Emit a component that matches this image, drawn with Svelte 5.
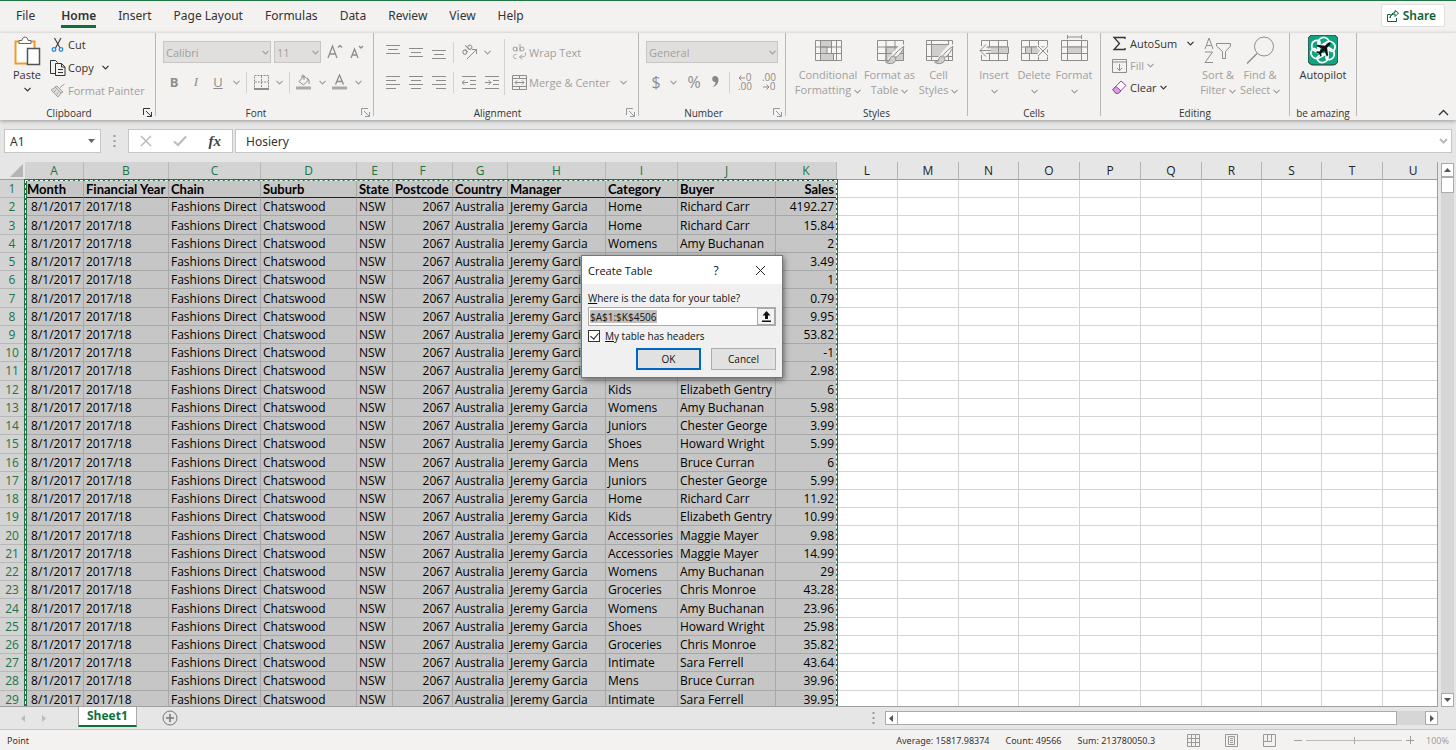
<script>
  const tabs = ['File', 'Home', 'Insert', 'Page Layout', 'Formulas', 'Data', 'Review', 'View', 'Help'];
  let activeTab = 'Home';

  const columns = [
    { letter: 'A', name: 'Month', width: 59 },
    { letter: 'B', name: 'Financial Year', width: 85 },
    { letter: 'C', name: 'Chain', width: 92 },
    { letter: 'D', name: 'Suburb', width: 96 },
    { letter: 'E', name: 'State', width: 36 },
    { letter: 'F', name: 'Postcode', width: 60 },
    { letter: 'G', name: 'Country', width: 55 },
    { letter: 'H', name: 'Manager', width: 98 },
    { letter: 'I', name: 'Category', width: 72 },
    { letter: 'J', name: 'Buyer', width: 98 },
    { letter: 'K', name: 'Sales', width: 61 },
    { letter: 'L', width: 61 },
    { letter: 'M', width: 61 },
    { letter: 'N', width: 60 },
    { letter: 'O', width: 61 },
    { letter: 'P', width: 61 },
    { letter: 'Q', width: 61 },
    { letter: 'R', width: 60 },
    { letter: 'S', width: 60 },
    { letter: 'T', width: 61 },
    { letter: 'U', width: 61 }
  ];

  const rowHeaderWidth = 25;
  const usedColumns = columns.filter((c) => c.name);
  const emptyColumns = columns.filter((c) => !c.name);
  const selectionWidth = usedColumns.reduce((sum, c) => sum + c.width, 0);
  const tableWidth = rowHeaderWidth + columns.reduce((sum, c) => sum + c.width, 0);

  const sales = [
    ['Home', 'Richard Carr', '4192.27'],
    ['Home', 'Richard Carr', '15.84'],
    ['Womens', 'Amy Buchanan', '2'],
    ['Womens', 'Amy Buchanan', '3.49'],
    ['Kids', 'Elizabeth Gentry', '1'],
    ['Juniors', 'Chester George', '0.79'],
    ['Shoes', 'Howard Wright', '9.95'],
    ['Mens', 'Bruce Curran', '53.82'],
    ['Home', 'Richard Carr', '-1'],
    ['Kids', 'Elizabeth Gentry', '2.98'],
    ['Kids', 'Elizabeth Gentry', '6'],
    ['Womens', 'Amy Buchanan', '5.98'],
    ['Juniors', 'Chester George', '3.99'],
    ['Shoes', 'Howard Wright', '5.99'],
    ['Mens', 'Bruce Curran', '6'],
    ['Juniors', 'Chester George', '5.99'],
    ['Home', 'Richard Carr', '11.92'],
    ['Kids', 'Elizabeth Gentry', '10.99'],
    ['Accessories', 'Maggie Mayer', '9.98'],
    ['Accessories', 'Maggie Mayer', '14.99'],
    ['Womens', 'Amy Buchanan', '29'],
    ['Groceries', 'Chris Monroe', '43.28'],
    ['Womens', 'Amy Buchanan', '23.96'],
    ['Shoes', 'Howard Wright', '25.98'],
    ['Groceries', 'Chris Monroe', '35.82'],
    ['Intimate', 'Sara Ferrell', '43.64'],
    ['Mens', 'Bruce Curran', '39.96'],
    ['Intimate', 'Sara Ferrell', '39.95']
  ];

  const rows = sales.map(([category, buyer, amount]) => [
    '8/1/2017', '2017/18', 'Fashions Direct', 'Chatswood', 'NSW', '2067',
    'Australia', 'Jeremy Garcia', category, buyer, amount
  ]);

  // Month, Postcode and Sales are right aligned
  const rightAligned = [0, 5, 10];

  let cellRef = 'A1';
  let formula = 'Hosiery';
  let zoom = 50;
  let dialogOpen = true;
  let tableRange = '$A$1:$K$4506';
  let hasHeaders = true;

  function closeDialog() {
    dialogOpen = false;
  }
</script>

{#snippet chevron()}
  <svg class="chevron" width="7" height="5" viewBox="0 0 7 5"><path d="M.5.800l3 3 3-3" /></svg>
{/snippet}

{#snippet launcher()}
  <svg width="9" height="9" viewBox="0 0 9 9"><path d="M.5 7V.5H7M3 3l5 5M8.500 4v4.500H4" /></svg>
{/snippet}

{#snippet brush()}
  <path class="halo" d="M30 9L20 20M16 25l5-5" />
  <path class="solid" d="M31 11.500c-3 1.500-8 6-10 9l2 2c3-2 7-7 8-11z" />
  <path class="tint" d="M20.500 21c-3 0-3.500 2-4 4-.5 1.500-2 2-4 2 2.500 2 7 2.500 9.500-.5 1.500-1.500.7-3.800-1.500-5.500z" />
{/snippet}

<div class="window">
  <header class="tab-bar">
    <nav>
      {#each tabs as tab}
        <button type="button" class="tab" class:active={tab === activeTab} onclick={() => (activeTab = tab)}>{tab}</button>
      {/each}
    </nav>
    <button type="button" class="share">
      <svg width="12" height="12" viewBox="0 0 12 12"><path d="M3.500 4.500h-3v7h9V8M3 8c.5-3 2-4 5-4V6.500l3.500-3.500L8 .5V2.500C5 3 3.500 5 3 8z" /></svg>
      Share
    </button>
  </header>

  <div class="ribbon">
    <section class="group clipboard">
      <div class="group-body">
        <button type="button" class="big enabled">
          <svg width="28" height="31" viewBox="0 0 28 31">
            <path d="M2.500 6.500h19v22h-19z" fill="#fff" stroke="#f29b2a" stroke-width="2" />
            <path d="M6 8.500V5.500h3c0-4.500 6-4.500 6 0h3v3z" fill="#fff" stroke="#666" />
            <path d="M14.500 13.500h12v16h-12z" fill="#fff" stroke="#555" stroke-width="1.500" />
          </svg>
          <span>Paste</span>
          {@render chevron()}
        </button>
        <div class="stack">
          <button type="button" class="small enabled">
            <svg width="16" height="16" viewBox="0 0 16 16">
              <path d="M4.500 1l5.500 10M11 1L5.500 11" stroke="#444" stroke-width="1.200" />
              <g stroke="#2b88d8" stroke-width="1.300"><circle cx="4" cy="12.500" r="1.800" /><circle cx="11" cy="12.500" r="1.800" /></g>
            </svg>
            Cut
          </button>
          <button type="button" class="small enabled">
            <svg width="16" height="16" viewBox="0 0 16 16">
              <path d="M5.500 13.500h-5V.5h5l2 2M5.500 3.500h6l3.500 3.500v8.500H5.500zM11.500 3.500V7H15M8 9.500h5M8 12.500h5" />
            </svg>
            Copy <i class="gap"></i>{@render chevron()}
          </button>
          <button type="button" class="small" disabled>
            <svg width="16" height="16" viewBox="0 0 16 16">
              <path d="M14.500 1L10 4.500M7 3l6 6-2 1-6-6zM5 4.500L1 7l7 7 3-4" fill="#ddd" /><path d="M4 9l2-2M6 11.500l2-2" />
            </svg>
            Format Painter
          </button>
        </div>
      </div>
      <footer>Clipboard <button type="button" class="launch enabled" aria-label="Clipboard options">{@render launcher()}</button></footer>
    </section>

    <section class="group font">
      <div class="group-body rows">
        <div class="row">
          <span class="select font-name"><select aria-label="Font" disabled><option>Calibri</option></select>{@render chevron()}</span>
          <span class="select font-size"><select aria-label="Font size" disabled><option>11</option></select>{@render chevron()}</span>
          <button type="button" class="icon" disabled aria-label="Increase font size">
            <svg width="16" height="16" viewBox="0 0 16 16"><path d="M1 14L5.500 2l4.500 12M2.500 10h6M11 3.500l2-2 2 2" stroke-width="1.300" /></svg>
          </button>
          <button type="button" class="icon" disabled aria-label="Decrease font size">
            <svg width="16" height="16" viewBox="0 0 16 16"><path d="M2 14L5.500 5 9 14M3.500 11h4M10 2l2 2 2-2" stroke-width="1.300" /></svg>
          </button>
        </div>
        <div class="row">
          <button type="button" class="icon letter" disabled><b>B</b></button>
          <button type="button" class="icon letter italic" disabled><i>I</i></button>
          <button type="button" class="icon letter" disabled><u>U</u></button>
          <button type="button" class="drop" disabled aria-label="Underline style">{@render chevron()}</button>
          <span class="divider"></span>
          <button type="button" class="icon" disabled aria-label="Borders">
            <svg width="15" height="15" viewBox="0 0 15 15"><path d="M.5.5h14v13H.5zM7.500 1v12M1 7h13" stroke-dasharray="2 1" /><path d="M0 14h15" stroke-width="2" /></svg>
          </button>
          <button type="button" class="drop" disabled aria-label="Border style">{@render chevron()}</button>
          <span class="divider"></span>
          <button type="button" class="icon" disabled aria-label="Fill color">
            <svg width="16" height="16" viewBox="0 0 16 16"><path d="M8 2L3 7.500l4.500 3.500 5-5zM6 4V1.500c1-1 2 0 2 1V6M11 4c2 1 2.500 3 2 6" /><path d="M0 14h15" stroke-width="3" stroke="#a9a9a9" /></svg>
          </button>
          <button type="button" class="drop" disabled aria-label="More fill colors">{@render chevron()}</button>
          <button type="button" class="icon" disabled aria-label="Font color">
            <svg width="16" height="16" viewBox="0 0 16 16"><path d="M3.500 10.500L7.500 1l4 9.500M5 7.500h5" stroke-width="1.300" /><path d="M0 14h15" stroke-width="3" stroke="#a9a9a9" /></svg>
          </button>
          <button type="button" class="drop" disabled aria-label="More font colors">{@render chevron()}</button>
        </div>
      </div>
      <footer>Font <button type="button" class="launch" aria-label="Font options">{@render launcher()}</button></footer>
    </section>

    <section class="group alignment">
      <div class="group-body">
        <div class="rows align-icons">
          <div class="row">
            <button type="button" class="icon" disabled aria-label="Top align"><svg width="14" height="14" viewBox="0 0 14 14"><path d="M0 .5h14M2 4.500h10M0 8.500h14" /></svg></button>
            <button type="button" class="icon" disabled aria-label="Middle align"><svg width="14" height="14" viewBox="0 0 14 14"><path d="M0 3.500h14M2 7.500h10M0 11.500h14" /></svg></button>
            <button type="button" class="icon" disabled aria-label="Bottom align"><svg width="14" height="14" viewBox="0 0 14 14"><path d="M0 5.500h14M2 9.500h10M0 13.500h14" /></svg></button>
            <span class="divider"></span>
            <button type="button" class="icon" disabled aria-label="Orientation">
              <svg width="16" height="16" viewBox="0 0 16 16"><g transform="rotate(-45 6 6)"><circle cx="3" cy="6" r="2" /><path d="M5 4v4M8 1.500V8" /><circle cx="10" cy="6" r="2" /></g><path d="M6 15l9-9M11 5.500h4.500V10" /></svg>
            </button>
            <button type="button" class="drop" disabled aria-label="Orientation options">{@render chevron()}</button>
          </div>
          <div class="row">
            <button type="button" class="icon" disabled aria-label="Align left"><svg width="14" height="14" viewBox="0 0 14 14"><path d="M0 1.500h14M0 5.500h10M0 9.500h14M0 13.500h10" /></svg></button>
            <button type="button" class="icon" disabled aria-label="Align center"><svg width="14" height="14" viewBox="0 0 14 14"><path d="M0 1.500h14M2 5.500h10M0 9.500h14M2 13.500h10" /></svg></button>
            <button type="button" class="icon" disabled aria-label="Align right"><svg width="14" height="14" viewBox="0 0 14 14"><path d="M0 1.500h14M4 5.500h10M0 9.500h14M4 13.500h10" /></svg></button>
            <span class="divider"></span>
            <button type="button" class="icon" disabled aria-label="Decrease indent"><svg width="14" height="14" viewBox="0 0 14 14"><path d="M0 1.500h14M8 5.500h6M8 9.500h6M0 13.500h14M0 7.500h6M2.500 5L0 7.500 2.500 10" /></svg></button>
            <button type="button" class="icon" disabled aria-label="Increase indent"><svg width="14" height="14" viewBox="0 0 14 14"><path d="M0 1.500h14M8 5.500h6M8 9.500h6M0 13.500h14M0 7.500h6M3.500 5L6 7.500 3.500 10" /></svg></button>
          </div>
        </div>
        <span class="divider tall"></span>
        <div class="rows">
          <div class="row">
            <button type="button" class="small" disabled>
              <svg width="15" height="16" viewBox="0 0 15 16"><circle cx="3" cy="5" r="2" /><path d="M5 3v4.500M8 0v7.500" /><circle cx="10" cy="5" r="2" /><path d="M4.500 10.500c-4-1-4 5 0 4M13.500 8.500v2c0 2-2 2.500-6 2.500M10 10.500L7.500 13l2.500 2.500" /></svg>
              Wrap Text
            </button>
          </div>
          <div class="row">
            <button type="button" class="small merge" disabled>
              <svg width="15" height="15" viewBox="0 0 15 15"><path d="M.5.500h14v14H.5zM.5 3.500h14M.5 11.500h14M7.500.500v3M7.500 11.500v3M3 7.500h9M5 5.500l-2 2 2 2M10 5.500l2 2-2 2" stroke="#8f8d8b" /></svg>
              Merge &amp; Center
            </button>
            <button type="button" class="drop" disabled aria-label="Merge options">{@render chevron()}</button>
          </div>
        </div>
      </div>
      <footer>Alignment <button type="button" class="launch" aria-label="Alignment options">{@render launcher()}</button></footer>
    </section>

    <section class="group number">
      <div class="group-body rows">
        <div class="row">
          <span class="select format"><select aria-label="Number format" disabled><option>General</option></select>{@render chevron()}</span>
        </div>
        <div class="row">
          <button type="button" class="icon sign" disabled>$</button>
          <button type="button" class="drop" disabled aria-label="Currency options">{@render chevron()}</button>
          <button type="button" class="icon sign percent" disabled>%</button>
          <button type="button" class="icon" disabled aria-label="Comma style">
            <svg width="10" height="14" viewBox="0 0 10 14"><path d="M5 1a3 3 0 1 0 .5 6C5.500 9.500 4 11 2 12c4-.5 6.500-3.500 6.500-7A3.500 3.500 0 0 0 5 1z" fill="#888" stroke="none" /></svg>
          </button>
          <span class="divider"></span>
          <button type="button" class="icon decimals" disabled aria-label="Increase decimal">
            <span><svg width="7" height="6" viewBox="0 0 7 6"><path d="M0 3h6M2.500.500L0 3l2.500 2.500" /></svg>0</span><span>.00</span>
          </button>
          <button type="button" class="icon decimals" disabled aria-label="Decrease decimal">
            <span>.00</span><span><svg width="7" height="6" viewBox="0 0 7 6"><path d="M0 3h6M3.500.500L6 3 3.500 5.500" /></svg>0</span>
          </button>
        </div>
      </div>
      <footer>Number <button type="button" class="launch" aria-label="Number options">{@render launcher()}</button></footer>
    </section>

    <section class="group styles">
      <div class="group-body">
        <button type="button" class="big conditional" disabled>
          <svg width="34" height="31" viewBox="0 0 34 31">
            <path class="solid" d="M4.500 5.500h26v20h-26zM4.500 12h26M4.500 18.500h26M9.500 5.500v20M20.500 5.500v20M25.500 5.500v20" />
            <path class="tint" d="M9.500 5.500h11V12h-11zM9.500 12h6.500v6.500H9.500zM9.500 18.500h13v7h-13z" />
          </svg>
          <span>Conditional</span>
          <span>Formatting {@render chevron()}</span>
        </button>
        <button type="button" class="big as-table" disabled>
          <svg width="34" height="31" viewBox="0 0 34 31">
            <path class="solid" d="M4.500 5.500h26v20h-26z" /><path class="tint" d="M13 12h17.500v13.500H13z" />
            <path d="M4.500 12h26M4.500 18.500h26M13 5.500v20M22 5.500v20" />
            {@render brush()}
          </svg>
          <span>Format as</span>
          <span>Table {@render chevron()}</span>
        </button>
        <button type="button" class="big cell-styles" disabled>
          <svg width="34" height="31" viewBox="0 0 34 31">
            <path class="solid" d="M4.500 5.500h26v20h-26zM4.500 9.500h26M4.500 21.500h26M9.500 5.500v20M26.500 5.500v20" />
            <path class="tint" d="M9.500 9.500h17v12h-17z" />
            {@render brush()}
          </svg>
          <span>Cell</span>
          <span>Styles {@render chevron()}</span>
        </button>
      </div>
      <footer>Styles</footer>
    </section>

    <section class="group cells">
      <div class="group-body">
        <button type="button" class="big" disabled>
          <svg width="34" height="31" viewBox="0 0 34 31">
            <path class="solid" d="M4.500 5.500h26v20h-26zM12.500 5.500v20M21.500 5.500v20M4.500 12h26M4.500 18.500h26" />
            <path class="tint" d="M11.500 12h20v6.500h-20zM21.500 12v6.500" />
            <path class="halo" d="M3 15.500h11M9 9.500l-6 6 6 6" /><path d="M3 15.500h11M9 9.500l-6 6 6 6" />
          </svg>
          <span>Insert</span>
          <span>{@render chevron()}</span>
        </button>
        <button type="button" class="big" disabled>
          <svg width="34" height="31" viewBox="0 0 34 31">
            <path class="solid" d="M4.500 5.500h26v20h-26zM12.500 5.500v20M21.500 5.500v20M4.500 12h26M4.500 18.500h26" />
            <path class="tint" d="M8.500 12h16v6.500h-16zM14.500 12v6.500" />
            <path class="halo" d="M21 11l10 10M31 11L21 21" /><path d="M21 11l10 10M31 11L21 21" />
          </svg>
          <span>Delete</span>
          <span>{@render chevron()}</span>
        </button>
        <button type="button" class="big" disabled>
          <svg width="34" height="31" viewBox="0 0 34 31">
            <path d="M10.500 0v4M24.500 0v4M10.500 2h14" />
            <path class="solid" d="M4.500 5.500h26v20h-26zM10.500 5.500v20M24.500 5.500v20M4.500 12h26M4.500 18.500h26" />
            <path class="tint" d="M10.500 12h14v6.500h-14z" />
          </svg>
          <span>Format</span>
          <span>{@render chevron()}</span>
        </button>
      </div>
      <footer>Cells</footer>
    </section>

    <section class="group editing">
      <div class="group-body">
        <div class="stack">
          <button type="button" class="small enabled">
            <svg width="15" height="15" viewBox="0 0 15 15"><path d="M13 3V1.500H2l5.500 6-5.500 6h11V12" stroke-width="1.300" /></svg>
            AutoSum <i class="gap"></i>{@render chevron()}
          </button>
          <button type="button" class="small" disabled>
            <svg width="15" height="14" viewBox="0 0 15 14"><path d="M.5.500h14v13H.5zM.5 3h14M7.500 5v6.500M5 9l2.500 2.500L10 9" stroke="#8f8d8b" /></svg>
            Fill {@render chevron()}
          </button>
          <button type="button" class="small enabled">
            <svg width="15" height="15" viewBox="0 0 15 15"><path d="M9 1l5 4.500-8 8H4L.800 9.500z" fill="#fff" stroke="#9b3fb0" /><path d="M4 6.500l5 4.500-3 2.500H4L.800 9.500z" fill="#d7a0e0" stroke="#9b3fb0" /></svg>
            Clear {@render chevron()}
          </button>
        </div>
        <button type="button" class="big" disabled>
          <svg width="30" height="31" viewBox="0 0 30 31">
            <path d="M2 14L6 3l4 11M3.500 10.500h5M2 17h7.500L2 27.500h8M13.500 8.500h14v2.500l-5 5.500v7h-3v-7l-6-5.500z" />
          </svg>
          <span>Sort &amp;</span>
          <span>Filter {@render chevron()}</span>
        </button>
        <button type="button" class="big" disabled>
          <svg width="30" height="31" viewBox="0 0 30 31"><circle cx="19" cy="11.500" r="9.500" /><path d="M12 18.500L2 28.500" stroke-width="1.500" /></svg>
          <span>Find &amp;</span>
          <span>Select {@render chevron()}</span>
        </button>
      </div>
      <footer>Editing</footer>
    </section>

    <section class="group amazing">
      <div class="group-body">
        <button type="button" class="big enabled">
          <svg width="30" height="31" viewBox="0 0 30 31">
            <rect y="0" width="30" height="30" rx="5" fill="#10a37f" />
            <g stroke="#fff" stroke-width="1.700">
              {#each [0, 60, 120, 180, 240, 300] as angle}
                <path transform="rotate({angle} 15 15)" d="M10 8.500c0-6 7-8 10-4 .8 1 1.200 2 1 3.500M10 8.500v8l5 3M21 8l-6.500 3.500" />
              {/each}
            </g>
            <path d="M22.500 7.500c-1-.8-2.500.2-3.500 1.200l-2 2-7.500-1-1.300 1.300 5.800 2.500-2.500 3-2.500-.3-1 1 3 1.600 1.600 3 1-1-.3-2.500 3-2.500 2.500 5.800 1.300-1.300-1-7.500 2-2c1-1 2-2.500 1.400-3.300z" fill="#111" stroke="none" />
          </svg>
          <span>Autopilot</span>
        </button>
      </div>
      <footer>be amazing</footer>
    </section>

    <button type="button" class="collapse" aria-label="Collapse the ribbon">
      <svg width="11" height="7" viewBox="0 0 11 7"><path d="M1 6l4.500-4.500L10 6" stroke-width="1.300" /></svg>
    </button>
  </div>

  <div class="formula-bar">
    <label class="name-box">
      <input aria-label="Name box" bind:value={cellRef} />
      <svg width="7" height="4" viewBox="0 0 7 4"><path d="M0 0h7L3.500 4z" fill="#666" stroke="none" /></svg>
    </label>
    <svg class="grip" width="3" height="12" viewBox="0 0 3 12"><path d="M1.500 0v12" stroke-width="2" stroke-dasharray="2 3" stroke="#999" /></svg>
    <div class="formula-buttons">
      <button type="button" aria-label="Cancel entry"><svg width="12" height="12" viewBox="0 0 12 12"><path d="M1 1l10 10M11 1L1 11" stroke="#bbb" stroke-width="1.500" /></svg></button>
      <button type="button" aria-label="Enter"><svg width="14" height="12" viewBox="0 0 14 12"><path d="M1 6.500L5 10l8-8.500" stroke="#bbb" stroke-width="2" /></svg></button>
      <button type="button" class="fx">fx</button>
    </div>
    <label class="formula">
      <input aria-label="Formula bar" bind:value={formula} />
      <svg width="9" height="6" viewBox="0 0 9 6"><path d="M1 1l3.500 3.500L8 1" stroke="#bbb" stroke-width="2" /></svg>
    </label>
  </div>

  <main>
    <div class="sheet">
      <table style="width: {tableWidth}px">
        <colgroup>
          <col style="width: {rowHeaderWidth}px" />
          {#each columns as column}
            <col style="width: {column.width}px" />
          {/each}
        </colgroup>
        <thead>
          <tr>
            <th class="corner" aria-label="Select all"><svg width="13" height="13" viewBox="0 0 13 13"><path d="M13 0v13H0z" fill="#b4b4b4" stroke="none" /></svg></th>
            {#each columns as column}
              <th class:selected={column.name}>{column.letter}</th>
            {/each}
          </tr>
        </thead>
        <tbody>
          <tr class="names">
            <th>1</th>
            {#each usedColumns as column, i}
              <td class="selected" class:right={i === 10}>{column.name}</td>
            {/each}
            {#each emptyColumns as column}<td></td>{/each}
          </tr>
          {#each rows as row, r}
            <tr>
              <th>{r + 2}</th>
              {#each row as value, i}
                <td class="selected" class:right={rightAligned.includes(i)}>{value}</td>
              {/each}
              {#each emptyColumns as column}<td></td>{/each}
            </tr>
          {/each}
        </tbody>
      </table>
      <div class="marquee" style="left: {rowHeaderWidth - 1}px; width: {selectionWidth + 2}px"></div>
    </div>
    <div class="v-scroll">
      <button type="button" aria-label="Scroll up"><svg width="7" height="4" viewBox="0 0 7 4"><path d="M0 4h7L3.500 0z" /></svg></button>
      <div class="thumb"></div>
      <div class="track"></div>
      <button type="button" aria-label="Scroll down"><svg width="7" height="4" viewBox="0 0 7 4"><path d="M0 0h7L3.500 4z" /></svg></button>
    </div>
  </main>

  <div class="sheet-bar">
    <div class="sheet-nav">
      <button type="button" aria-label="Previous sheet"><svg width="4" height="7" viewBox="0 0 4 7"><path d="M4 0v7L0 3.500z" /></svg></button>
      <button type="button" aria-label="Next sheet"><svg width="4" height="7" viewBox="0 0 4 7"><path d="M0 0v7l4-3.500z" /></svg></button>
    </div>
    <button type="button" class="sheet-tab">Sheet1</button>
    <button type="button" class="add" aria-label="New sheet">
      <svg width="16" height="16" viewBox="0 0 16 16"><circle cx="8" cy="8" r="7" /><path d="M4 8h8M8 4v8" stroke-width="1.500" /></svg>
    </button>
    <div class="h-scroll">
      <svg class="grip" width="3" height="12" viewBox="0 0 3 12"><path d="M1.500 0v12" stroke-width="2" stroke-dasharray="2 3" stroke="#999" /></svg>
      <button type="button" aria-label="Scroll left"><svg width="4" height="7" viewBox="0 0 4 7"><path d="M4 0v7L0 3.500z" /></svg></button>
      <div class="thumb"></div>
      <div class="track"></div>
      <button type="button" aria-label="Scroll right"><svg width="4" height="7" viewBox="0 0 4 7"><path d="M0 0v7l4-3.500z" /></svg></button>
    </div>
  </div>

  <footer class="status">
    <span class="mode">Point</span>
    <span>Average: 15817.98374</span>
    <span>Count: 49566</span>
    <span>Sum: 213780050.3</span>
    <div class="views">
      <button type="button" aria-label="Normal"><svg width="13" height="13" viewBox="0 0 13 13"><path d="M.5.500h12v12H.5zM4.500.500v12M8.500.500v12M.5 4.500h12M.5 8.500h12" /></svg></button>
      <button type="button" aria-label="Page layout"><svg width="13" height="13" viewBox="0 0 13 13"><path d="M.5.500h12v12H.5zM3.500 2.500h6v8h-6zM5 4.500h3M5 6.500h3M5 8.500h3" /></svg></button>
      <button type="button" aria-label="Page break preview"><svg width="13" height="13" viewBox="0 0 13 13"><path d="M.5.500h12v12H.5zM4.500.500v7h4v-7M.5 7.500h4" /></svg></button>
    </div>
    <div class="zoom">
      <button type="button" aria-label="Zoom out"><svg width="8" height="8" viewBox="0 0 8 8"><path d="M0 4.500h8" /></svg></button>
      <input type="range" aria-label="Zoom" min="0" max="100" bind:value={zoom} />
      <button type="button" aria-label="Zoom in"><svg width="8" height="8" viewBox="0 0 8 8"><path d="M0 4.500h8M4.500 0v8" /></svg></button>
      <span>100%</span>
    </div>
  </footer>

  {#if dialogOpen}
    <div class="dialog" role="dialog" aria-labelledby="dialog-title">
      <div class="title-bar">
        <h2 id="dialog-title">Create Table</h2>
        <button type="button" aria-label="Help">?</button>
        <button type="button" aria-label="Close" onclick={closeDialog}>
          <svg width="11" height="11" viewBox="0 0 11 11"><path d="M1 1l9 9M10 1l-9 9" stroke="#222" /></svg>
        </button>
      </div>
      <form onsubmit={(e) => { e.preventDefault(); closeDialog(); }}>
        <label for="range"><u>W</u>here is the data for your table?</label>
        <div class="range-box">
          <input id="range" bind:value={tableRange} />
          <button type="button" aria-label="Collapse dialog">
            <svg width="9" height="11" viewBox="0 0 9 11"><path d="M4.500 0L8.500 4.500H6V8H3V4.500H.5zM0 9.500h9V11H0z" fill="#111" stroke="none" /></svg>
          </button>
        </div>
        <label class="check"><input type="checkbox" bind:checked={hasHeaders} /><span><u>M</u>y table has headers</span></label>
        <div class="actions">
          <button type="submit" class="ok">OK</button>
          <button type="button" onclick={closeDialog}>Cancel</button>
        </div>
      </form>
    </div>
  {/if}
</div>

<style>
  :global(body) {
    margin: 0;
    overflow: hidden;
  }

  .window {
    position: relative;
    display: flex;
    flex-direction: column;
    height: 100vh;
    box-sizing: border-box;
    border-top: 1px solid #217346;
    background: #e6e6e6;
    font-family: "Open Sans", "Noto Sans", sans-serif;
    font-size: 11px;
    color: #333;
    overflow: hidden;
  }

  .window * {
    box-sizing: border-box;
  }

  button,
  input,
  select {
    margin: 0;
    padding: 0;
    border: 0;
    background: none;
    font: inherit;
    color: inherit;
  }

  input:focus {
    outline: none;
  }

  svg {
    display: block;
    flex: none;
    fill: none;
    stroke: currentColor;
  }

  /* Tabs */

  .tab-bar {
    display: flex;
    justify-content: space-between;
    align-items: flex-start;
    height: 32px;
    flex: none;
    padding: 0 11px 0 16px;
    background: #f3f2f1;
    font-family: "Noto Sans", sans-serif;
  }

  nav {
    display: flex;
    gap: 22px;
  }

  .tab {
    height: 27px;
    padding-top: 4px;
    border-bottom: 3px solid transparent;
    font-size: 12px;
  }

  .tab:first-child {
    margin-right: 4px;
  }

  .tab.active {
    border-color: #0f703b;
    font-weight: 600;
  }

  .share {
    display: flex;
    align-items: center;
    gap: 4px;
    height: 23px;
    margin-top: 3px;
    padding: 0 8px 0 5px;
    border: 1px solid #e1dfdd;
    border-radius: 2px;
    background: #fff;
    color: #0e6035;
    font-size: 12px;
    font-weight: 600;
  }

  /* Ribbon */

  .ribbon {
    display: flex;
    flex: none;
    height: 87px;
    padding-bottom: 4px;
    background: #f3f2f1;
    box-shadow: 0 1px 4px rgba(0, 0, 0, 0.35);
  }

  .group {
    position: relative;
    display: flex;
    flex-direction: column;
    border-right: 1px solid #b9b8b7;
  }

  .group footer {
    height: 12px;
    margin-top: auto;
    margin-bottom: -3px;
    font-size: 10px;
    line-height: 12px;
    text-align: center;
  }

  .clipboard { width: 156px; }
  .font { width: 218px; }
  .alignment { width: 265px; }
  .number { width: 147px; }
  .styles { width: 182px; }
  .cells { width: 133px; }
  .editing { width: 189px; }
  .amazing { width: 67px; }

  .clipboard footer,
  .font footer,
  .alignment footer,
  .number footer {
    padding-right: 17px;
  }

  .launch {
    position: absolute;
    right: 3px;
    bottom: -1px;
    color: #999;
  }

  .launch.enabled {
    color: #333;
  }

  .group-body {
    display: flex;
    color: #a19f9d;
  }

  .enabled {
    color: #333;
  }

  .rows {
    display: flex;
    flex-direction: column;
    gap: 8px;
    padding-top: 8px;
  }

  .group-body.rows {
    padding-left: 7px;
  }

  .row {
    display: flex;
    align-items: center;
    height: 22px;
  }

  .stack {
    display: flex;
    flex-direction: column;
  }

  .small {
    display: flex;
    align-items: center;
    gap: 2px;
    height: 22px;
    white-space: nowrap;
  }

  .clipboard .big {
    width: 50px;
    padding-left: 4px;
  }

  .clipboard .big .chevron {
    margin-top: 5px;
  }

  .clipboard .small {
    height: 23px;
  }

  .editing .small {
    gap: 3px;
    height: 21px;
  }

  .gap {
    width: 4px;
  }

  .chevron {
    display: inline-block;
    vertical-align: middle;
    stroke-width: 1.2;
  }

  .big {
    display: flex;
    flex-direction: column;
    align-items: center;
    padding-top: 2px;
    line-height: 15px;
    white-space: nowrap;
  }

  .big > svg:first-child {
    margin-bottom: 1px;
  }

  .big span {
    display: block;
  }

  .icon {
    display: flex;
    align-items: center;
    justify-content: center;
    width: 22px;
    height: 22px;
    color: #8f8d8b;
  }

  .align-icons .icon {
    width: 23px;
  }

  .letter {
    font-size: 13px;
  }

  .italic {
    font-family: "Liberation Serif", serif;
  }

  .drop {
    display: flex;
    align-items: center;
    justify-content: center;
    width: 14px;
    height: 22px;
  }

  .divider {
    width: 1px;
    height: 21px;
    margin: 0 3px;
    background: #d2d0ce;
  }

  .divider.tall {
    height: 56px;
    margin: 6px 7px 0 0;
  }

  .align-icons {
    width: 130px;
    padding-left: 7px;
  }

  .merge {
    width: 104px;
  }

  .select {
    position: relative;
    display: flex;
    align-items: center;
    margin-right: 3px;
  }

  .select select {
    width: 100%;
    height: 22px;
    padding: 0 2px;
    border: 1px solid #c8c6c4;
    border-radius: 0;
    background: #e1dfdd;
    color: #a19f9d;
    opacity: 1;
    appearance: none;
  }

  .select .chevron {
    position: absolute;
    right: 2px;
  }

  .font-name { width: 108px; }
  .font-size { width: 47px; }
  .format { width: 132px; }

  .sign {
    width: 20px;
    font-size: 16px;
  }

  .percent {
    margin-left: 4px;
  }

  .decimals {
    flex-direction: column;
    width: 24px;
    font-size: 10px;
    line-height: 9px;
  }

  .decimals span {
    display: flex;
    align-items: center;
  }

  .solid {
    fill: #f6f5f4;
  }

  .tint {
    fill: #d0cecc;
  }

  .halo {
    stroke: #f3f2f1;
    stroke-width: 4;
  }

  .big[disabled] > svg:first-child {
    color: #8f8d8b;
  }

  .styles .group-body {
    padding-left: 9px;
  }

  .conditional { width: 66px; }
  .as-table { width: 57px; }
  .cell-styles { width: 41px; }

  .cells .group-body {
    padding-left: 6px;
  }

  .cells .big {
    width: 40px;
  }

  .editing .group-body {
    padding-left: 11px;
  }

  .editing .stack {
    gap: 1px;
    width: 85px;
  }

  .editing .big {
    width: 42px;
  }

  .amazing .big {
    width: 100%;
  }

  .collapse {
    align-self: flex-end;
    margin-left: auto;
    padding: 0 7px 0 0;
  }

  /* Formula bar */

  .formula-bar {
    display: flex;
    align-items: center;
    flex: none;
    height: 42px;
    padding: 0 4px;
    font-family: "Noto Sans", sans-serif;
    font-size: 12px;
  }

  .name-box,
  .formula,
  .formula-buttons {
    display: flex;
    align-items: center;
    height: 24px;
    border: 1px solid #c6c6c6;
    background: #fff;
  }

  .name-box {
    width: 97px;
    padding: 0 5px;
  }

  .name-box input,
  .formula input {
    flex: 1;
    min-width: 0;
  }

  .formula-bar .grip {
    margin: 0 12px;
  }

  .formula-buttons {
    width: 105px;
    margin-right: 2px;
  }

  .formula-buttons button {
    display: flex;
    flex: 1;
    justify-content: center;
  }

  .fx {
    color: #444;
    font: italic 700 15px "Liberation Serif", serif;
  }

  .formula {
    flex: 1;
    padding: 0 3px 0 10px;
  }

  /* Grid */

  main {
    display: flex;
    flex: 1;
    min-height: 0;
  }

  .sheet {
    position: relative;
    flex: 1;
    min-width: 0;
    overflow: hidden;
    border-right: 1px solid #9f9f9f;
    border-bottom: 1px solid #9f9f9f;
  }

  /* the last row runs a little under the bottom edge */
  table {
    height: calc(100% + 3px);
    border-spacing: 0;
    table-layout: fixed;
    background: #fff;
  }

  th,
  td {
    height: 18px;
    padding: 0;
    line-height: 16px;
    white-space: nowrap;
    overflow: hidden;
  }

  th {
    background: #e6e6e6;
    border-right: 1px solid #b4b4b4;
    font-size: 12px;
    font-weight: 400;
    color: #222;
  }

  thead th {
    height: 18px;
    border-bottom: 1px solid #9f9f9f;
  }

  thead .selected,
  tbody th {
    background: #d3d3d3;
    border-color: #b8b8b8;
    color: #217346;
  }

  tbody th {
    padding-top: 1px;
    border-bottom: 1px solid #b8b8b8;
  }

  .corner {
    border-right: 0;
  }

  .corner svg {
    margin-left: 10px;
  }

  td {
    padding: 1px 2px 0;
    border-right: 1px solid #d4d4d4;
    border-bottom: 1px solid #d4d4d4;
    font-size: 12px;
    color: #000;
  }

  td.selected {
    background: #c6c6c6;
    border-color: #a8a8a8;
  }

  .names .selected {
    border-bottom-color: #222;
    font-family: Lato, sans-serif;
    font-size: 13px;
    font-weight: 700;
  }

  .right {
    text-align: right;
  }

  .marquee {
    position: absolute;
    top: 17px;
    bottom: -4px;
    border: 2px solid #217346;
    border-left-width: 3px;
  }

  /* white dashes that run along the outer edge of the green line */
  .marquee::after {
    content: "";
    position: absolute;
    inset: -1px -1px -1px -2px;
    border: 1px dashed #fff;
  }

  .v-scroll {
    display: flex;
    flex-direction: column;
    width: 18px;
    padding: 1px 2px 0 3px;
  }

  .v-scroll button,
  .h-scroll button {
    display: flex;
    align-items: center;
    justify-content: center;
    flex: none;
    width: 13px;
    height: 14px;
    border: 1px solid #ababab;
    background: #fff;
  }

  .v-scroll svg,
  .h-scroll button svg {
    fill: #555;
    stroke: none;
  }

  .thumb {
    border: 1px solid #ababab;
    background: #fff;
  }

  .v-scroll .thumb {
    height: 16px;
  }

  .track {
    flex: 1;
    background: #d6d6d6;
  }

  /* Sheet tabs */

  .sheet-bar {
    display: flex;
    flex: none;
    height: 22px;
  }

  .sheet-nav {
    display: flex;
    gap: 17px;
    width: 78px;
    padding-left: 21px;
  }

  .sheet-nav svg {
    fill: #bbb;
    stroke: none;
  }

  .sheet-tab {
    height: 20px;
    padding: 0 8px;
    border: 1px solid #ababab;
    border-top: 0;
    border-bottom: 2px solid #0f703b;
    background: #fff;
    color: #0f703b;
    font-size: 12px;
    font-weight: 700;
    line-height: 16px;
  }

  .add {
    padding-left: 25px;
    color: #777;
  }

  .h-scroll {
    display: flex;
    align-items: center;
    width: 40%;
    margin-left: auto;
    padding-right: 18px;
  }

  .h-scroll .grip {
    margin: 0 10px 0 -2px;
  }

  .h-scroll .thumb {
    flex: 18;
    height: 14px;
    margin-left: -1px;
  }

  .h-scroll .track {
    height: 14px;
  }

  /* Status bar */

  .status {
    display: flex;
    align-items: center;
    flex: none;
    height: 21px;
    padding: 0 7px;
    border-top: 1px solid #c6c6c6;
    background: #f3f2f1;
    font-family: "Noto Sans", sans-serif;
    font-size: 9px;
    color: #333;
  }

  .status > span {
    margin-right: 16px;
  }

  .status .mode {
    margin-right: auto;
  }

  .views {
    display: flex;
    gap: 25px;
    margin: 0 18px 0 16px;
    color: #999;
  }

  .zoom {
    display: flex;
    align-items: center;
    gap: 4px;
    color: #a19f9d;
  }

  .zoom input {
    width: 96px;
    height: 9px;
    appearance: none;
    background: linear-gradient(#bbb, #bbb) center / 100% 1px no-repeat;
  }

  .zoom input::-webkit-slider-thumb {
    appearance: none;
    width: 1px;
    height: 7px;
    background: #aaa;
  }

  .zoom span {
    margin-left: 8px;
  }

  /* Create Table dialog */

  .dialog {
    position: absolute;
    top: 254px;
    left: 581px;
    width: 202px;
    border: 1px solid #777;
    background: #f0f0f0;
    box-shadow: 1px 2px 6px rgba(0, 0, 0, 0.5);
    font-size: 10px;
    color: #111;
  }

  .title-bar {
    display: flex;
    align-items: center;
    height: 28px;
    padding-left: 6px;
    background: #fff;
  }

  .title-bar h2 {
    flex: 1;
    margin: 0;
    font-size: 11px;
    font-weight: 400;
  }

  .title-bar button {
    display: flex;
    align-items: center;
    justify-content: center;
    width: 44px;
    font-size: 12px;
  }

  .dialog form {
    display: flex;
    flex-direction: column;
    padding: 7px 6px;
  }

  .dialog label {
    line-height: 14px;
  }

  .range-box {
    display: flex;
    align-items: center;
    height: 19px;
    margin-top: 2px;
    padding-left: 1px;
    border: 1px solid #aaa;
    background: #fff;
  }

  .range-box input {
    field-sizing: content;
    height: 13px;
    background: #bfbfbf;
  }

  .range-box button {
    display: flex;
    align-items: center;
    justify-content: center;
    width: 18px;
    height: 17px;
    margin-left: auto;
    border: 1px solid #aaa;
    background: #f4f4f4;
  }

  .check {
    display: flex;
    align-items: center;
    gap: 5px;
    margin-top: 3px;
  }

  .check input {
    position: relative;
    width: 12px;
    height: 12px;
    border: 1px solid #333;
    background: #fff;
    appearance: none;
  }

  .check input:checked::before {
    content: "";
    position: absolute;
    top: 0;
    left: 3px;
    width: 4px;
    height: 7px;
    border: solid #222;
    border-width: 0 1px 1px 0;
    transform: rotate(40deg);
  }

  .actions {
    display: flex;
    justify-content: flex-end;
    gap: 10px;
    margin-top: 5px;
  }

  .actions button {
    width: 65px;
    height: 22px;
    border: 1px solid #adadad;
    background: #e1e1e1;
  }

  .actions .ok {
    border: 2px solid #0067c0;
  }
</style>
